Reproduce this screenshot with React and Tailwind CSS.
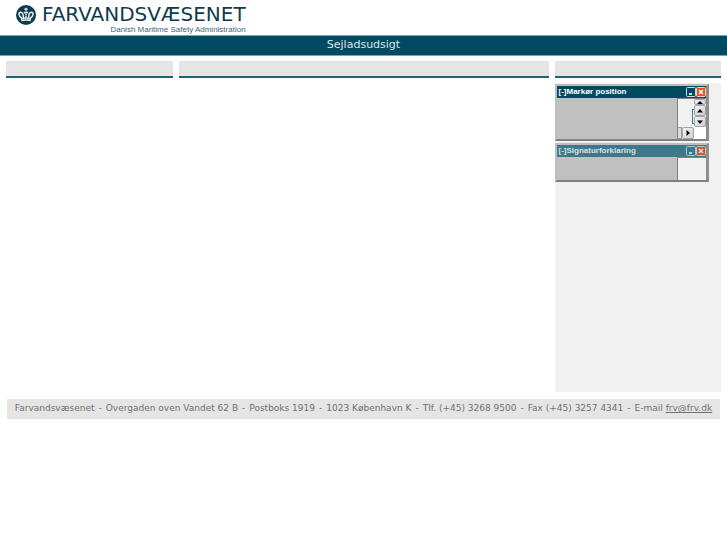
import React, { useState } from 'react';

const CrownLogo = () => (
  <svg viewBox="0 0 20 20" className="mt-px h-5 w-5 shrink-0" aria-hidden="true">
    <circle cx="10" cy="10" r="10" fill="#0f3c4c" />
    <g fill="none" stroke="#e4ebee" strokeWidth="1.5">
      <path d="M5.6 13.2C2.4 10.8 2.2 7.6 4.4 7.2C6.4 6.9 7.4 9.5 7.4 13" />
      <path d="M14.4 13.2C17.6 10.8 17.8 7.6 15.6 7.2C13.6 6.9 12.6 9.5 12.6 13" />
      <path d="M8.1 8.2C8.6 7 11.4 7 11.9 8.2" />
      <path d="M10 7V13" strokeDasharray="1.4 0.6" />
    </g>
    <path d="M10 2.8V6M8.3 4.2H11.7" stroke="#e4ebee" strokeWidth="1.2" />
    <path d="M4.9 12.9Q10 11.7 15.1 12.9L14.7 16.2Q10 15.1 5.3 16.2Z" fill="#e4ebee" />
    <path d="M6.2 14.5Q10 13.5 13.8 14.5" fill="none" stroke="#0f3c4c" strokeWidth="0.7" strokeDasharray="1.1 0.7" />
  </svg>
);

const MinimizeIcon = () => (
  <svg viewBox="0 0 10 10" className="h-[10px] w-[10px]" aria-hidden="true">
    <rect x="0.5" y="0.5" width="9" height="9" rx="1" fill="none" stroke="#c8dce2" />
    <path d="M3 7H6" stroke="#fff" strokeWidth="1.6" />
  </svg>
);

const CloseIcon = () => (
  <svg viewBox="0 0 10 10" className="h-[10px] w-[10px]" aria-hidden="true">
    <rect x="0.5" y="0.5" width="9" height="9" rx="1" fill="#e8521d" stroke="#f3d3c6" />
    <path d="M3 3L7 7M7 3L3 7" stroke="#fff" strokeWidth="1.5" />
  </svg>
);

const arrows = {
  up: 'M3 7.5H9L6 4Z',
  upClipped: 'M3 4H9L6 1Z',
  down: 'M3 4.5H9L6 8Z',
  right: 'M4.5 3V9L8 6Z',
};

const ArrowButton = ({ direction, label, className = 'h-[11px] items-center' }) => (
  <button
    type="button"
    aria-label={label}
    className={`flex w-3 shrink-0 justify-center overflow-hidden rounded-[2px] border border-[#a4a4a8] bg-linear-to-br from-[#f4f4f5] to-[#cfcfd3] ${className}`}
  >
    <svg viewBox="0 0 12 12" className="h-3 w-3 shrink-0" aria-hidden="true">
      <path d={arrows[direction]} fill="#000" />
    </svg>
  </button>
);

const ToolWindow = ({ title, inactive, bodyClass, children }) => {
  const [open, setOpen] = useState(true);

  return (
    <section className="border-2 border-r-[3px] border-t-[#bdbdbd] border-r-[#8e8e8e] border-b-[#808080] border-l-[#bdbdbd] bg-[#c0c0c0]">
      <div
        className={`flex h-3 items-center pl-0.5 ${inactive ? 'bg-[#3f788a] text-[#d6e3e7]' : 'bg-[#004b61] text-white'}`}
      >
        <h2 className="flex-1 font-['Liberation_Sans',sans-serif] text-[8px] leading-3 font-bold">
          [-]{title}
        </h2>
        <div className={`flex ${inactive ? 'opacity-80' : ''}`}>
          <button type="button" aria-label="Minimer" onClick={() => setOpen(!open)}>
            <MinimizeIcon />
          </button>
          <button type="button" aria-label="Luk">
            <CloseIcon />
          </button>
        </div>
      </div>
      {open && (
        <div className={`flex justify-end ${bodyClass}`}>
          <div className="w-[29px] border-t border-l border-[#808080] bg-[#f1f1f1]">{children}</div>
        </div>
      )}
    </section>
  );
};

const ColumnHead = () => <div className="h-[17px] border-b-2 border-[#1b6278] bg-[#e5e5e5]" />;

const App = () => {
  return (
    <div className="bg-white font-['DejaVu_Sans',sans-serif]">
      <header className="flex h-[35px] items-start gap-1.5 pt-1 pl-4 text-[#0f3c4c]">
        <CrownLogo />
        <div className="flex flex-col items-end gap-0.5">
          <div className="text-[20px] leading-5">FARVANDSVÆSENET</div>
          <div className="font-['Liberation_Sans',sans-serif] text-[8px] leading-[8px] text-[#3d6777]">
            Danish Maritime Safety Administration
          </div>
        </div>
      </header>

      <div className="h-[21px] border-y border-[#7fa4b0] bg-[#004b61] text-center">
        <h1 className="text-[11px] leading-[17px] text-[#dce7ea]">Sejladsudsigt</h1>
      </div>

      <main className="grid min-h-[336px] grid-cols-[9fr_20fr_9fr] gap-1.5 px-1.5 pt-[5px]">
        <div>
          <ColumnHead />
        </div>
        <div>
          <ColumnHead />
        </div>
        <div className="flex flex-col gap-[5px]">
          <ColumnHead />
          <div className="flex flex-1 flex-col gap-0.5 bg-[#f1f1f1] pt-px pr-3">
            <ToolWindow title="Markør position" bodyClass="h-[41px]">
              <div className="flex h-7 justify-end">
                <div className="mt-[10px] h-[15px] w-0.5 border-y border-l border-[#39819a]" />
                <div className="flex flex-col">
                  <ArrowButton direction="upClipped" label="Rul op" className="h-[6px] items-start" />
                  <ArrowButton direction="up" label="Op" />
                  <ArrowButton direction="down" label="Ned" />
                </div>
              </div>
              <div className="flex h-3">
                <div className="w-1 border-y border-r border-[#9a9a9e] bg-[#dcdcdf]" />
                <ArrowButton direction="right" label="Højre" className="h-3 items-center" />
                <div className="flex-1 bg-white" />
              </div>
            </ToolWindow>
            <ToolWindow title="Signaturforklaring" inactive bodyClass="h-[23px]" />
          </div>
        </div>
      </main>

      <footer className="mx-[7px] mt-[7px] flex min-h-5 flex-wrap items-center justify-center gap-x-1 bg-[#e5e5e5] text-[9px] text-[#707070]">
        <span>Farvandsvæsenet</span>
        <span>-</span>
        <span>Overgaden oven Vandet 62 B</span>
        <span>-</span>
        <span>Postboks 1919</span>
        <span>-</span>
        <span>1023 København K</span>
        <span>-</span>
        <span>Tlf. (+45) 3268 9500</span>
        <span>-</span>
        <span>Fax (+45) 3257 4341</span>
        <span>-</span>
        <span>
          E-mail{' '}
          <a href="mailto:frv@frv.dk" className="underline">
            frv@frv.dk
          </a>
        </span>
      </footer>
    </div>
  );
};

export default App;
